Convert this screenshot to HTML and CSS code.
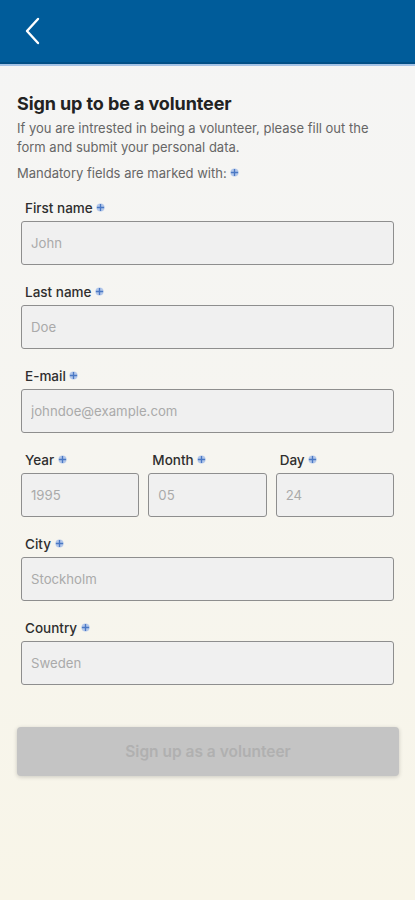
FILE: index.html
```html
<!DOCTYPE html>
<html lang="en">
<head>
<meta charset="utf-8">
<link rel="stylesheet" href="styles.css">
</head>
<body>
<header class="topbar">
  <button class="back" aria-label="Back">
    <svg width="16" height="28" viewBox="0 0 16 28"><path d="M14 2 L3 14 L14 26" fill="none" stroke="#fff" stroke-width="2.4" stroke-linecap="round" stroke-linejoin="round"/></svg>
  </button>
</header>
<main class="content">
  <h1 class="title">Sign up to be a volunteer</h1>
  <p class="intro">If you are intrested in being a volunteer, please fill out the form and submit your personal data.</p>
  <p class="mandatory">Mandatory fields are marked with: <span class="mark"><svg width="9" height="9" viewBox="0 0 10 10"><circle cx="5" cy="5" r="4.5" fill="#b4c8ea"/><path d="M5 1v8M1 5h8" stroke="#4a78c4" stroke-width="1.5"/></svg></span></p>

  <form class="form">
    <div class="field">
      <label class="label">First name <span class="mark"><svg width="9" height="9" viewBox="0 0 10 10"><circle cx="5" cy="5" r="4.5" fill="#b4c8ea"/><path d="M5 1v8M1 5h8" stroke="#4a78c4" stroke-width="1.5"/></svg></span></label>
      <input class="input" placeholder="John">
    </div>
    <div class="field">
      <label class="label">Last name <span class="mark"><svg width="9" height="9" viewBox="0 0 10 10"><circle cx="5" cy="5" r="4.5" fill="#b4c8ea"/><path d="M5 1v8M1 5h8" stroke="#4a78c4" stroke-width="1.5"/></svg></span></label>
      <input class="input" placeholder="Doe">
    </div>
    <div class="field">
      <label class="label">E-mail <span class="mark"><svg width="9" height="9" viewBox="0 0 10 10"><circle cx="5" cy="5" r="4.5" fill="#b4c8ea"/><path d="M5 1v8M1 5h8" stroke="#4a78c4" stroke-width="1.5"/></svg></span></label>
      <input class="input" placeholder="johndoe@example.com">
    </div>
    <div class="row">
      <div class="field">
        <label class="label">Year <span class="mark"><svg width="9" height="9" viewBox="0 0 10 10"><circle cx="5" cy="5" r="4.5" fill="#b4c8ea"/><path d="M5 1v8M1 5h8" stroke="#4a78c4" stroke-width="1.5"/></svg></span></label>
        <input class="input" placeholder="1995">
      </div>
      <div class="field">
        <label class="label">Month <span class="mark"><svg width="9" height="9" viewBox="0 0 10 10"><circle cx="5" cy="5" r="4.5" fill="#b4c8ea"/><path d="M5 1v8M1 5h8" stroke="#4a78c4" stroke-width="1.5"/></svg></span></label>
        <input class="input" placeholder="05">
      </div>
      <div class="field">
        <label class="label">Day <span class="mark"><svg width="9" height="9" viewBox="0 0 10 10"><circle cx="5" cy="5" r="4.5" fill="#b4c8ea"/><path d="M5 1v8M1 5h8" stroke="#4a78c4" stroke-width="1.5"/></svg></span></label>
        <input class="input" placeholder="24">
      </div>
    </div>
    <div class="field">
      <label class="label">City <span class="mark"><svg width="9" height="9" viewBox="0 0 10 10"><circle cx="5" cy="5" r="4.5" fill="#b4c8ea"/><path d="M5 1v8M1 5h8" stroke="#4a78c4" stroke-width="1.5"/></svg></span></label>
      <input class="input" placeholder="Stockholm">
    </div>
    <div class="field">
      <label class="label">Country <span class="mark"><svg width="9" height="9" viewBox="0 0 10 10"><circle cx="5" cy="5" r="4.5" fill="#b4c8ea"/><path d="M5 1v8M1 5h8" stroke="#4a78c4" stroke-width="1.5"/></svg></span></label>
      <input class="input" placeholder="Sweden">
    </div>
  </form>

  <button class="submit" disabled>Sign up as a volunteer</button>
</main>
</body>
</html>
```
FILE: styles.css
```css
* { box-sizing: border-box; }
html, body { height: 100%; }
body {
  margin: 0;
  font-family: Inter, "Noto Sans", sans-serif;
  background: linear-gradient(to bottom, #f5f5f5 0%, #f6f5f0 50%, #f8f5e8 100%);
  min-height: 900px;
}
.topbar {
  height: 66px;
  background: #005c9a;
  border-bottom: 2px solid #a5c3e6;
  box-shadow: inset 0 -2px 0 #004f86;
  display: flex;
  align-items: center;
  padding-left: 24px;
}
.back {
  background: none;
  border: 0;
  padding: 0;
  display: flex;
  margin-top: -2px;
}
.content {
  padding: 27px 16px 0 17px;
}
.title {
  margin: 0;
  font-size: 18px;
  line-height: 22px;
  font-weight: 700;
  color: #222;
  letter-spacing: -0.1px;
}
.intro {
  margin: 4px 0 0;
  font-size: 13px;
  line-height: 19px;
  color: #666;
}
.mandatory {
  margin: 7px 0 0;
  font-size: 13px;
  line-height: 19px;
  color: #666;
}
.mark {
  display: inline-flex;
  vertical-align: 1px;
}
.form {
  padding: 16px 5px 0 4px;
  display: flex;
  flex-direction: column;
  gap: 18px;
}
.field {
  display: flex;
  flex-direction: column;
  min-width: 0;
}
.label {
  padding-left: 4px;
  font-size: 13.5px;
  line-height: 19px;
  font-weight: 500;
  color: #2e2e2e;
  margin-bottom: 3px;
}
.input {
  height: 44px;
  width: 100%;
  border: 1.6px solid #8e8e8e;
  border-radius: 3px;
  background: #f0f0f0;
  padding: 0 9px;
  font-family: inherit;
  font-size: 13.2px;
  color: #333;
}
.input::placeholder { color: #aaa; }
.row {
  display: grid;
  grid-template-columns: 1fr 1fr 1fr;
  gap: 9px;
}
.submit {
  margin-top: 42px;
  width: 382px;
  height: 49px;
  border: 0;
  border-radius: 4px;
  background: #c4c4c4;
  box-shadow: 0 1px 4px rgba(0,0,0,0.18);
  font-family: inherit;
  font-size: 15.5px;
  font-weight: 600;
  color: #b0b0b0;
}
```
